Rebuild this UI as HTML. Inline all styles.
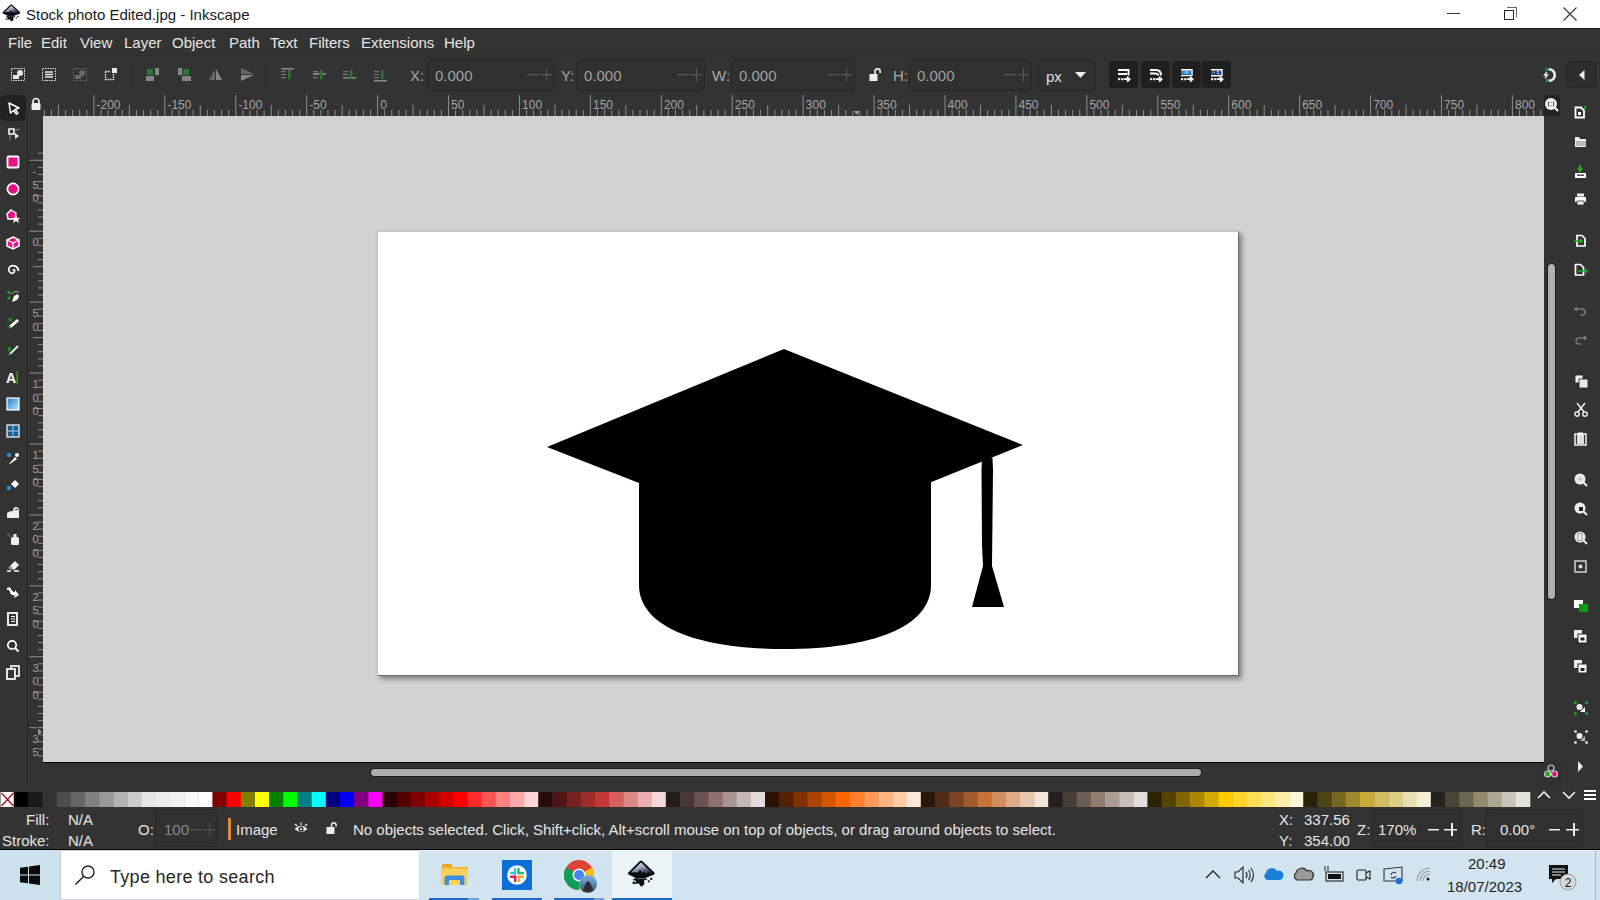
<!DOCTYPE html><html><head><meta charset="utf-8"><style>
*{margin:0;padding:0;box-sizing:border-box}
html,body{width:1600px;height:900px;overflow:hidden;background:#333333;font-family:"Liberation Sans",sans-serif;position:relative}
.ab{position:absolute}
.t{position:absolute;white-space:nowrap;line-height:1}
svg{position:absolute;overflow:visible}
</style></head><body>

<div class="ab" style="left:0px;top:0px;width:1600px;height:28px;background:#fff;"></div>
<div class="ab" style="left:0px;top:28px;width:1600px;height:1px;background:#1e1e1e;"></div>
<div class="ab" style="left:0px;top:55px;width:1600px;height:1px;background:#2d2d2d;"></div>
<svg style="left:2px;top:4px" width="20" height="20" viewBox="0 0 20 20"><defs><linearGradient id="ig2" x1="0" y1="0" x2="0.6" y2="1"><stop offset="0" stop-color="#fff"/><stop offset="0.55" stop-color="#9aa0b8"/><stop offset="1" stop-color="#2a3050"/></linearGradient></defs><g transform="scale(0.64)"><path d="M13 1.2Q14.5 0 16 1.2L28 12.5Q29.5 14.2 27.5 15.2L19 18.5L21 20.5L17.5 21L18 25L14.5 27.5L12 24L8 25L9.5 21.5L5.5 20.5L9 18.5L2 15.2Q0 14.2 1.5 12.5Z" fill="#0c0c10"/><path d="M14.5 2.5L25.5 13Q22 12.5 19 14.5L17 11.5L15.5 14L13.5 9.5L11.5 13Q8 12 4 13Z" fill="url(#ig2)"/><path d="M10 19.5Q14 18.5 19 19.5" stroke="#888" stroke-width="0.8" fill="none"/><circle cx="7" cy="23.5" r="1.3" fill="#0c0c10"/><circle cx="22.5" cy="22" r="1.1" fill="#0c0c10"/><circle cx="25" cy="19.5" r="1.2" fill="#0c0c10"/></g></svg>
<div class="t" style="left:26px;top:7px;font-size:15px;color:#1a1a1a;">Stock photo Edited.jpg - Inkscape</div>
<div class="ab" style="left:1447px;top:13px;width:13px;height:1px;background:#333;"></div>
<div class="ab" style="left:1504px;top:10px;width:10px;height:10px;background:transparent;border:1px solid #222"></div>
<div class="ab" style="left:1507px;top:7px;width:10px;height:10px;background:transparent;border-top:1px solid #666;border-right:1px solid #666"></div>
<svg style="left:1563px;top:7px" width="14" height="14" viewBox="0 0 14 14"><path d="M0.5 0.5L13.5 13.5M13.5 0.5L0.5 13.5" stroke="#333" stroke-width="1.1"/></svg>
<div class="t" style="left:8px;top:35px;font-size:15px;color:#e6e6e6;">File</div>
<div class="t" style="left:41px;top:35px;font-size:15px;color:#e6e6e6;">Edit</div>
<div class="t" style="left:80px;top:35px;font-size:15px;color:#e6e6e6;">View</div>
<div class="t" style="left:124px;top:35px;font-size:15px;color:#e6e6e6;">Layer</div>
<div class="t" style="left:172px;top:35px;font-size:15px;color:#e6e6e6;">Object</div>
<div class="t" style="left:229px;top:35px;font-size:15px;color:#e6e6e6;">Path</div>
<div class="t" style="left:270px;top:35px;font-size:15px;color:#e6e6e6;">Text</div>
<div class="t" style="left:309px;top:35px;font-size:15px;color:#e6e6e6;">Filters</div>
<div class="t" style="left:361px;top:35px;font-size:15px;color:#e6e6e6;">Extensions</div>
<div class="t" style="left:444px;top:35px;font-size:15px;color:#e6e6e6;">Help</div>
<svg style="left:11px;top:68px" width="14" height="13" viewBox="0 0 14 13"><rect x="0.5" y="0.5" width="13" height="12" fill="none" stroke="#e8e8e8" stroke-dasharray="1.5 1"/><rect x="2" y="7" width="6" height="4" fill="#e8e8e8"/><circle cx="9" cy="5" r="3" fill="#e8e8e8"/></svg>
<svg style="left:42px;top:68px" width="14" height="13" viewBox="0 0 14 13"><rect x="0.5" y="0.5" width="13" height="12" fill="none" stroke="#e8e8e8" stroke-dasharray="1.5 1"/><path d="M3 4h8M3 6.5h8M3 9h8" stroke="#e8e8e8" stroke-width="1.6"/></svg>
<svg style="left:73px;top:68px" width="14" height="13" viewBox="0 0 14 13"><rect x="0.5" y="0.5" width="13" height="12" fill="none" stroke="#6a6a6a" stroke-dasharray="1.5 1"/><rect x="2" y="7" width="6" height="4" fill="#6a6a6a"/><circle cx="9" cy="5" r="3" fill="#6a6a6a"/></svg>
<svg style="left:104px;top:67px" width="14" height="14" viewBox="0 0 14 14"><path d="M1.5 4.5V12.5H9.5V7M1.5 4.5H6" fill="none" stroke="#e8e8e8" stroke-width="1.4" stroke-dasharray="1.6 0.9"/><rect x="8" y="1" width="5" height="5" fill="#e8e8e8"/></svg>
<svg style="left:146px;top:68px" width="14" height="13" viewBox="0 0 14 13"><rect x="0" y="8" width="8" height="5" fill="#858585"/><rect x="1" y="1" width="6" height="6" fill="#2f7430"/><rect x="9" y="0" width="4" height="7" fill="#858585"/></svg>
<svg style="left:177px;top:68px" width="14" height="13" viewBox="0 0 14 13"><rect x="5" y="8" width="9" height="5" fill="#858585"/><rect x="6" y="1" width="6" height="6" fill="#2f7430"/><rect x="1" y="0" width="4" height="7" fill="#858585"/></svg>
<svg style="left:209px;top:68px" width="13" height="13" viewBox="0 0 13 13"><path d="M6 1L0 12H6Z" fill="#666"/><path d="M7 1L13 12H7Z" fill="#858585"/></svg>
<svg style="left:240px;top:68px" width="15" height="13" viewBox="0 0 15 13"><path d="M1 0L14 6H1Z" fill="#666"/><path d="M1 7L14 7L1 13Z" fill="#858585"/></svg>
<div class="ab" style="left:266px;top:62px;width:1px;height:26px;background:#2e2e2e;"></div>
<div class="ab" style="left:132px;top:62px;width:1px;height:26px;background:#2e2e2e;"></div>
<svg style="left:281px;top:68px" width="13" height="13" viewBox="0 0 13 13"><rect x="0" y="0" width="13" height="1.6" fill="#858585"/><rect x="0" y="3" width="5" height="1.2" fill="#777"/><rect x="0" y="6" width="5" height="1.2" fill="#777"/><rect x="0" y="9" width="5" height="1.2" fill="#777"/><rect x="7" y="2" width="2.5" height="9" fill="#2f7430"/></svg>
<svg style="left:313px;top:68px" width="13" height="13" viewBox="0 0 13 13"><rect x="0" y="5" width="13" height="1.6" fill="#858585"/><rect x="0" y="3" width="5" height="1.2" fill="#777"/><rect x="0" y="6" width="5" height="1.2" fill="#777"/><rect x="0" y="9" width="5" height="1.2" fill="#777"/><rect x="7" y="2" width="2.5" height="9" fill="#2f7430"/></svg>
<svg style="left:343px;top:68px" width="13" height="13" viewBox="0 0 13 13"><rect x="0" y="9" width="13" height="1.6" fill="#858585"/><rect x="0" y="3" width="5" height="1.2" fill="#777"/><rect x="0" y="6" width="5" height="1.2" fill="#777"/><rect x="0" y="9" width="5" height="1.2" fill="#777"/><rect x="7" y="2" width="2.5" height="9" fill="#2f7430"/></svg>
<svg style="left:374px;top:68px" width="13" height="13" viewBox="0 0 13 13"><rect x="0" y="12" width="13" height="1.6" fill="#858585"/><rect x="0" y="3" width="5" height="1.2" fill="#777"/><rect x="0" y="6" width="5" height="1.2" fill="#777"/><rect x="0" y="9" width="5" height="1.2" fill="#777"/><rect x="7" y="2" width="2.5" height="9" fill="#2f7430"/></svg>
<div class="t" style="left:410px;top:68px;font-size:15px;color:#a8a8a8;">X:</div>
<div class="ab" style="left:427px;top:59px;width:128px;height:32px;background:#303030;border:1px solid #252525;border-radius:5px"></div>
<div class="t" style="left:435px;top:68px;font-size:15px;color:#a0a0a0;">0.000</div>
<svg style="left:527px;top:74px" width="26" height="2" viewBox="0 0 26 2"><rect x="0" y="0" width="12" height="1.3" fill="#585858"/><rect x="14" y="0" width="11" height="1.3" fill="#585858"/></svg>
<div class="ab" style="left:546px;top:68px;width:1px;height:14px;background:#585858;"></div>
<div class="t" style="left:561px;top:68px;font-size:15px;color:#a8a8a8;">Y:</div>
<div class="ab" style="left:576px;top:59px;width:129px;height:32px;background:#303030;border:1px solid #252525;border-radius:5px"></div>
<div class="t" style="left:584px;top:68px;font-size:15px;color:#a0a0a0;">0.000</div>
<svg style="left:677px;top:74px" width="26" height="2" viewBox="0 0 26 2"><rect x="0" y="0" width="12" height="1.3" fill="#585858"/><rect x="14" y="0" width="11" height="1.3" fill="#585858"/></svg>
<div class="ab" style="left:696px;top:68px;width:1px;height:14px;background:#585858;"></div>
<div class="t" style="left:712px;top:68px;font-size:15px;color:#a8a8a8;">W:</div>
<div class="ab" style="left:731px;top:59px;width:124px;height:32px;background:#303030;border:1px solid #252525;border-radius:5px"></div>
<div class="t" style="left:739px;top:68px;font-size:15px;color:#a0a0a0;">0.000</div>
<svg style="left:827px;top:74px" width="26" height="2" viewBox="0 0 26 2"><rect x="0" y="0" width="12" height="1.3" fill="#585858"/><rect x="14" y="0" width="11" height="1.3" fill="#585858"/></svg>
<div class="ab" style="left:846px;top:68px;width:1px;height:14px;background:#585858;"></div>
<div class="t" style="left:893px;top:68px;font-size:15px;color:#a8a8a8;">H:</div>
<div class="ab" style="left:909px;top:59px;width:123px;height:32px;background:#303030;border:1px solid #252525;border-radius:5px"></div>
<div class="t" style="left:917px;top:68px;font-size:15px;color:#a0a0a0;">0.000</div>
<svg style="left:1004px;top:74px" width="26" height="2" viewBox="0 0 26 2"><rect x="0" y="0" width="12" height="1.3" fill="#585858"/><rect x="14" y="0" width="11" height="1.3" fill="#585858"/></svg>
<div class="ab" style="left:1023px;top:68px;width:1px;height:14px;background:#585858;"></div>
<svg style="left:869px;top:68px" width="13" height="13" viewBox="0 0 13 13"><path d="M6 6V3.5A2.6 2.6 0 0 1 11.2 3.5V5" stroke="#eee" stroke-width="1.6" fill="none"/><rect x="0.5" y="6" width="8" height="7" fill="#eee"/></svg>
<div class="ab" style="left:1037px;top:59px;width:59px;height:32px;background:#303030;border:1px solid #252525;border-radius:5px"></div>
<div class="t" style="left:1046px;top:69px;font-size:15px;color:#e0e0e0;">px</div>
<svg style="left:1075px;top:72px" width="11" height="6" viewBox="0 0 11 6"><path d="M0 0H11L5.5 6Z" fill="#eee"/></svg>
<div class="ab" style="left:1109px;top:61px;width:29px;height:27px;background:#1f1f1f;border-radius:4px"></div>
<div class="ab" style="left:1141px;top:61px;width:29px;height:27px;background:#1f1f1f;border-radius:4px"></div>
<div class="ab" style="left:1172px;top:61px;width:29px;height:27px;background:#1f1f1f;border-radius:4px"></div>
<div class="ab" style="left:1202px;top:61px;width:29px;height:27px;background:#1f1f1f;border-radius:4px"></div>
<svg style="left:1118px;top:69px" width="14" height="13" viewBox="0 0 14 13"><path d="M0 1H10.5V6.5M0 5H9" stroke="#fff" stroke-width="1.9" fill="none"/><rect x="0" y="9.2" width="2.2" height="2" fill="#fff"/><rect x="3.2" y="9.2" width="2.2" height="2" fill="#fff"/><path d="M6 10.2H11.5M9 7.8L11.6 10.2L9 12.6" stroke="#fff" stroke-width="1.8" fill="none"/></svg>
<svg style="left:1150px;top:69px" width="14" height="13" viewBox="0 0 14 13"><path d="M0 1H6Q11 1 11 6.5M0 4.5H5Q8 4.5 8.5 6.5" stroke="#fff" stroke-width="1.8" fill="none"/><rect x="0" y="9.2" width="2.2" height="2" fill="#fff"/><rect x="3.2" y="9.2" width="2.2" height="2" fill="#fff"/><path d="M6 10.2H11.5M9 7.8L11.6 10.2L9 12.6" stroke="#fff" stroke-width="1.8" fill="none"/></svg>
<svg style="left:1181px;top:69px" width="14" height="13" viewBox="0 0 14 13"><defs><linearGradient id="tbg" x1="0" x2="1"><stop offset="0" stop-color="#1f6fb8"/><stop offset="0.6" stop-color="#5cc0ff"/><stop offset="1" stop-color="#1f6fb8"/></linearGradient></defs><rect x="0" y="1.5" width="10" height="4" fill="url(#tbg)"/><path d="M0 0.8H11V7M0 6.6H11" stroke="#fff" stroke-width="1.4" fill="none"/><rect x="0" y="9.2" width="2.2" height="2" fill="#fff"/><rect x="3.2" y="9.2" width="2.2" height="2" fill="#fff"/><path d="M6 10.2H11.5M9 7.8L11.6 10.2L9 12.6" stroke="#fff" stroke-width="1.8" fill="none"/></svg>
<svg style="left:1211px;top:69px" width="14" height="13" viewBox="0 0 14 13"><rect x="0" y="1.5" width="10" height="4.5" fill="#173a66"/><path d="M1 4.5L2.5 2.5L4 4.5M5.5 2.5H8L6 4.5H8.5" stroke="#8fc4f0" stroke-width="0.9" fill="none"/><path d="M0 0.8H11V7M0 6.8H11" stroke="#fff" stroke-width="1.4" fill="none"/><rect x="0" y="9.2" width="2.2" height="2" fill="#fff"/><rect x="3.2" y="9.2" width="2.2" height="2" fill="#fff"/><path d="M6 10.2H11.5M9 7.8L11.6 10.2L9 12.6" stroke="#fff" stroke-width="1.8" fill="none"/></svg>
<svg style="left:1543px;top:67px" width="16" height="16" viewBox="0 0 16 16"><path d="M6 2.2A5.8 5.8 0 0 1 6 13.8" stroke="#f0f0f0" stroke-width="2.6" fill="none"/><rect x="2.5" y="1" width="3.5" height="3.2" fill="#2a8a3a"/><rect x="2.5" y="11.8" width="3.5" height="3.2" fill="#2a8a3a"/><path d="M4 5L1.5 8H4.5L2 11" stroke="#f0f0f0" stroke-width="1.3" fill="none"/></svg>
<div class="ab" style="left:1567px;top:61px;width:29px;height:27px;background:#2e2e2e;border:1px solid #242424;border-radius:4px"></div>
<svg style="left:1579px;top:70px" width="6" height="10" viewBox="0 0 6 10"><path d="M5.5 0V10L0 5Z" fill="#eee"/></svg>
<div class="ab" style="left:43px;top:116px;width:1501px;height:646px;background:#d2d2d2;"></div>
<div class="ab" style="left:43px;top:762px;width:1501px;height:1px;background:#000;"></div>
<div class="ab" style="left:377px;top:231px;width:862px;height:445px;background:#fff;border-top:1px solid #c4c4c4;border-left:1px solid #c4c4c4;border-right:1px solid #6a6a6a;border-bottom:1px solid #6a6a6a;box-shadow:3px 3px 5px rgba(0,0,0,0.38)"></div>
<svg style="left:540px;top:340px" width="470" height="320" viewBox="0 0 470 320"><g transform="translate(-540,-340)" fill="#000"><path d="M547 447L784 349L1023 445L929 483L639 483Z"/><path d="M639 475H931V585C931 627 872 649 785 649C698 649 639 627 639 585Z"/><path d="M982 458H992.5L993 470L992 566L1004 607H972L983 566L982 545L981.5 470Z"/></g></svg>
<div class="ab" style="left:43px;top:93px;width:1501px;height:23px;background:#333333;"></div>
<svg style="left:0;top:0" width="1600" height="900"><rect x="43.75" y="110" width="1" height="6" fill="#8e8e8e"/><rect x="50.85" y="110" width="1" height="6" fill="#8e8e8e"/><rect x="57.94" y="105" width="1" height="11" fill="#8e8e8e"/><rect x="65.03" y="110" width="1" height="6" fill="#8e8e8e"/><rect x="72.12" y="110" width="1" height="6" fill="#8e8e8e"/><rect x="79.21" y="110" width="1" height="6" fill="#8e8e8e"/><rect x="86.31" y="110" width="1" height="6" fill="#8e8e8e"/><rect x="93.40" y="95" width="1" height="21" fill="#8e8e8e"/><rect x="100.49" y="110" width="1" height="6" fill="#8e8e8e"/><rect x="107.58" y="110" width="1" height="6" fill="#8e8e8e"/><rect x="114.68" y="110" width="1" height="6" fill="#8e8e8e"/><rect x="121.77" y="110" width="1" height="6" fill="#8e8e8e"/><rect x="128.86" y="105" width="1" height="11" fill="#8e8e8e"/><rect x="135.96" y="110" width="1" height="6" fill="#8e8e8e"/><rect x="143.05" y="110" width="1" height="6" fill="#8e8e8e"/><rect x="150.14" y="110" width="1" height="6" fill="#8e8e8e"/><rect x="157.23" y="110" width="1" height="6" fill="#8e8e8e"/><rect x="164.33" y="95" width="1" height="21" fill="#8e8e8e"/><rect x="171.42" y="110" width="1" height="6" fill="#8e8e8e"/><rect x="178.51" y="110" width="1" height="6" fill="#8e8e8e"/><rect x="185.60" y="110" width="1" height="6" fill="#8e8e8e"/><rect x="192.70" y="110" width="1" height="6" fill="#8e8e8e"/><rect x="199.79" y="105" width="1" height="11" fill="#8e8e8e"/><rect x="206.88" y="110" width="1" height="6" fill="#8e8e8e"/><rect x="213.97" y="110" width="1" height="6" fill="#8e8e8e"/><rect x="221.07" y="110" width="1" height="6" fill="#8e8e8e"/><rect x="228.16" y="110" width="1" height="6" fill="#8e8e8e"/><rect x="235.25" y="95" width="1" height="21" fill="#8e8e8e"/><rect x="242.34" y="110" width="1" height="6" fill="#8e8e8e"/><rect x="249.44" y="110" width="1" height="6" fill="#8e8e8e"/><rect x="256.53" y="110" width="1" height="6" fill="#8e8e8e"/><rect x="263.62" y="110" width="1" height="6" fill="#8e8e8e"/><rect x="270.71" y="105" width="1" height="11" fill="#8e8e8e"/><rect x="277.81" y="110" width="1" height="6" fill="#8e8e8e"/><rect x="284.90" y="110" width="1" height="6" fill="#8e8e8e"/><rect x="291.99" y="110" width="1" height="6" fill="#8e8e8e"/><rect x="299.08" y="110" width="1" height="6" fill="#8e8e8e"/><rect x="306.18" y="95" width="1" height="21" fill="#8e8e8e"/><rect x="313.27" y="110" width="1" height="6" fill="#8e8e8e"/><rect x="320.36" y="110" width="1" height="6" fill="#8e8e8e"/><rect x="327.45" y="110" width="1" height="6" fill="#8e8e8e"/><rect x="334.55" y="110" width="1" height="6" fill="#8e8e8e"/><rect x="341.64" y="105" width="1" height="11" fill="#8e8e8e"/><rect x="348.73" y="110" width="1" height="6" fill="#8e8e8e"/><rect x="355.82" y="110" width="1" height="6" fill="#8e8e8e"/><rect x="362.92" y="110" width="1" height="6" fill="#8e8e8e"/><rect x="370.01" y="110" width="1" height="6" fill="#8e8e8e"/><rect x="377.10" y="95" width="1" height="21" fill="#8e8e8e"/><rect x="384.19" y="110" width="1" height="6" fill="#8e8e8e"/><rect x="391.29" y="110" width="1" height="6" fill="#8e8e8e"/><rect x="398.38" y="110" width="1" height="6" fill="#8e8e8e"/><rect x="405.47" y="110" width="1" height="6" fill="#8e8e8e"/><rect x="412.56" y="105" width="1" height="11" fill="#8e8e8e"/><rect x="419.66" y="110" width="1" height="6" fill="#8e8e8e"/><rect x="426.75" y="110" width="1" height="6" fill="#8e8e8e"/><rect x="433.84" y="110" width="1" height="6" fill="#8e8e8e"/><rect x="440.93" y="110" width="1" height="6" fill="#8e8e8e"/><rect x="448.03" y="95" width="1" height="21" fill="#8e8e8e"/><rect x="455.12" y="110" width="1" height="6" fill="#8e8e8e"/><rect x="462.21" y="110" width="1" height="6" fill="#8e8e8e"/><rect x="469.30" y="110" width="1" height="6" fill="#8e8e8e"/><rect x="476.40" y="110" width="1" height="6" fill="#8e8e8e"/><rect x="483.49" y="105" width="1" height="11" fill="#8e8e8e"/><rect x="490.58" y="110" width="1" height="6" fill="#8e8e8e"/><rect x="497.67" y="110" width="1" height="6" fill="#8e8e8e"/><rect x="504.77" y="110" width="1" height="6" fill="#8e8e8e"/><rect x="511.86" y="110" width="1" height="6" fill="#8e8e8e"/><rect x="518.95" y="95" width="1" height="21" fill="#8e8e8e"/><rect x="526.04" y="110" width="1" height="6" fill="#8e8e8e"/><rect x="533.13" y="110" width="1" height="6" fill="#8e8e8e"/><rect x="540.23" y="110" width="1" height="6" fill="#8e8e8e"/><rect x="547.32" y="110" width="1" height="6" fill="#8e8e8e"/><rect x="554.41" y="105" width="1" height="11" fill="#8e8e8e"/><rect x="561.50" y="110" width="1" height="6" fill="#8e8e8e"/><rect x="568.60" y="110" width="1" height="6" fill="#8e8e8e"/><rect x="575.69" y="110" width="1" height="6" fill="#8e8e8e"/><rect x="582.78" y="110" width="1" height="6" fill="#8e8e8e"/><rect x="589.88" y="95" width="1" height="21" fill="#8e8e8e"/><rect x="596.97" y="110" width="1" height="6" fill="#8e8e8e"/><rect x="604.06" y="110" width="1" height="6" fill="#8e8e8e"/><rect x="611.15" y="110" width="1" height="6" fill="#8e8e8e"/><rect x="618.25" y="110" width="1" height="6" fill="#8e8e8e"/><rect x="625.34" y="105" width="1" height="11" fill="#8e8e8e"/><rect x="632.43" y="110" width="1" height="6" fill="#8e8e8e"/><rect x="639.52" y="110" width="1" height="6" fill="#8e8e8e"/><rect x="646.62" y="110" width="1" height="6" fill="#8e8e8e"/><rect x="653.71" y="110" width="1" height="6" fill="#8e8e8e"/><rect x="660.80" y="95" width="1" height="21" fill="#8e8e8e"/><rect x="667.89" y="110" width="1" height="6" fill="#8e8e8e"/><rect x="674.99" y="110" width="1" height="6" fill="#8e8e8e"/><rect x="682.08" y="110" width="1" height="6" fill="#8e8e8e"/><rect x="689.17" y="110" width="1" height="6" fill="#8e8e8e"/><rect x="696.26" y="105" width="1" height="11" fill="#8e8e8e"/><rect x="703.36" y="110" width="1" height="6" fill="#8e8e8e"/><rect x="710.45" y="110" width="1" height="6" fill="#8e8e8e"/><rect x="717.54" y="110" width="1" height="6" fill="#8e8e8e"/><rect x="724.63" y="110" width="1" height="6" fill="#8e8e8e"/><rect x="731.73" y="95" width="1" height="21" fill="#8e8e8e"/><rect x="738.82" y="110" width="1" height="6" fill="#8e8e8e"/><rect x="745.91" y="110" width="1" height="6" fill="#8e8e8e"/><rect x="753.00" y="110" width="1" height="6" fill="#8e8e8e"/><rect x="760.10" y="110" width="1" height="6" fill="#8e8e8e"/><rect x="767.19" y="105" width="1" height="11" fill="#8e8e8e"/><rect x="774.28" y="110" width="1" height="6" fill="#8e8e8e"/><rect x="781.37" y="110" width="1" height="6" fill="#8e8e8e"/><rect x="788.47" y="110" width="1" height="6" fill="#8e8e8e"/><rect x="795.56" y="110" width="1" height="6" fill="#8e8e8e"/><rect x="802.65" y="95" width="1" height="21" fill="#8e8e8e"/><rect x="809.74" y="110" width="1" height="6" fill="#8e8e8e"/><rect x="816.84" y="110" width="1" height="6" fill="#8e8e8e"/><rect x="823.93" y="110" width="1" height="6" fill="#8e8e8e"/><rect x="831.02" y="110" width="1" height="6" fill="#8e8e8e"/><rect x="838.11" y="105" width="1" height="11" fill="#8e8e8e"/><rect x="845.21" y="110" width="1" height="6" fill="#8e8e8e"/><rect x="852.30" y="110" width="1" height="6" fill="#8e8e8e"/><rect x="859.39" y="110" width="1" height="6" fill="#8e8e8e"/><rect x="866.48" y="110" width="1" height="6" fill="#8e8e8e"/><rect x="873.58" y="95" width="1" height="21" fill="#8e8e8e"/><rect x="880.67" y="110" width="1" height="6" fill="#8e8e8e"/><rect x="887.76" y="110" width="1" height="6" fill="#8e8e8e"/><rect x="894.85" y="110" width="1" height="6" fill="#8e8e8e"/><rect x="901.95" y="110" width="1" height="6" fill="#8e8e8e"/><rect x="909.04" y="105" width="1" height="11" fill="#8e8e8e"/><rect x="916.13" y="110" width="1" height="6" fill="#8e8e8e"/><rect x="923.22" y="110" width="1" height="6" fill="#8e8e8e"/><rect x="930.32" y="110" width="1" height="6" fill="#8e8e8e"/><rect x="937.41" y="110" width="1" height="6" fill="#8e8e8e"/><rect x="944.50" y="95" width="1" height="21" fill="#8e8e8e"/><rect x="951.59" y="110" width="1" height="6" fill="#8e8e8e"/><rect x="958.69" y="110" width="1" height="6" fill="#8e8e8e"/><rect x="965.78" y="110" width="1" height="6" fill="#8e8e8e"/><rect x="972.87" y="110" width="1" height="6" fill="#8e8e8e"/><rect x="979.96" y="105" width="1" height="11" fill="#8e8e8e"/><rect x="987.06" y="110" width="1" height="6" fill="#8e8e8e"/><rect x="994.15" y="110" width="1" height="6" fill="#8e8e8e"/><rect x="1001.24" y="110" width="1" height="6" fill="#8e8e8e"/><rect x="1008.33" y="110" width="1" height="6" fill="#8e8e8e"/><rect x="1015.43" y="95" width="1" height="21" fill="#8e8e8e"/><rect x="1022.52" y="110" width="1" height="6" fill="#8e8e8e"/><rect x="1029.61" y="110" width="1" height="6" fill="#8e8e8e"/><rect x="1036.70" y="110" width="1" height="6" fill="#8e8e8e"/><rect x="1043.80" y="110" width="1" height="6" fill="#8e8e8e"/><rect x="1050.89" y="105" width="1" height="11" fill="#8e8e8e"/><rect x="1057.98" y="110" width="1" height="6" fill="#8e8e8e"/><rect x="1065.07" y="110" width="1" height="6" fill="#8e8e8e"/><rect x="1072.16" y="110" width="1" height="6" fill="#8e8e8e"/><rect x="1079.26" y="110" width="1" height="6" fill="#8e8e8e"/><rect x="1086.35" y="95" width="1" height="21" fill="#8e8e8e"/><rect x="1093.44" y="110" width="1" height="6" fill="#8e8e8e"/><rect x="1100.54" y="110" width="1" height="6" fill="#8e8e8e"/><rect x="1107.63" y="110" width="1" height="6" fill="#8e8e8e"/><rect x="1114.72" y="110" width="1" height="6" fill="#8e8e8e"/><rect x="1121.81" y="105" width="1" height="11" fill="#8e8e8e"/><rect x="1128.91" y="110" width="1" height="6" fill="#8e8e8e"/><rect x="1136.00" y="110" width="1" height="6" fill="#8e8e8e"/><rect x="1143.09" y="110" width="1" height="6" fill="#8e8e8e"/><rect x="1150.18" y="110" width="1" height="6" fill="#8e8e8e"/><rect x="1157.28" y="95" width="1" height="21" fill="#8e8e8e"/><rect x="1164.37" y="110" width="1" height="6" fill="#8e8e8e"/><rect x="1171.46" y="110" width="1" height="6" fill="#8e8e8e"/><rect x="1178.55" y="110" width="1" height="6" fill="#8e8e8e"/><rect x="1185.64" y="110" width="1" height="6" fill="#8e8e8e"/><rect x="1192.74" y="105" width="1" height="11" fill="#8e8e8e"/><rect x="1199.83" y="110" width="1" height="6" fill="#8e8e8e"/><rect x="1206.92" y="110" width="1" height="6" fill="#8e8e8e"/><rect x="1214.02" y="110" width="1" height="6" fill="#8e8e8e"/><rect x="1221.11" y="110" width="1" height="6" fill="#8e8e8e"/><rect x="1228.20" y="95" width="1" height="21" fill="#8e8e8e"/><rect x="1235.29" y="110" width="1" height="6" fill="#8e8e8e"/><rect x="1242.39" y="110" width="1" height="6" fill="#8e8e8e"/><rect x="1249.48" y="110" width="1" height="6" fill="#8e8e8e"/><rect x="1256.57" y="110" width="1" height="6" fill="#8e8e8e"/><rect x="1263.66" y="105" width="1" height="11" fill="#8e8e8e"/><rect x="1270.76" y="110" width="1" height="6" fill="#8e8e8e"/><rect x="1277.85" y="110" width="1" height="6" fill="#8e8e8e"/><rect x="1284.94" y="110" width="1" height="6" fill="#8e8e8e"/><rect x="1292.03" y="110" width="1" height="6" fill="#8e8e8e"/><rect x="1299.12" y="95" width="1" height="21" fill="#8e8e8e"/><rect x="1306.22" y="110" width="1" height="6" fill="#8e8e8e"/><rect x="1313.31" y="110" width="1" height="6" fill="#8e8e8e"/><rect x="1320.40" y="110" width="1" height="6" fill="#8e8e8e"/><rect x="1327.50" y="110" width="1" height="6" fill="#8e8e8e"/><rect x="1334.59" y="105" width="1" height="11" fill="#8e8e8e"/><rect x="1341.68" y="110" width="1" height="6" fill="#8e8e8e"/><rect x="1348.77" y="110" width="1" height="6" fill="#8e8e8e"/><rect x="1355.87" y="110" width="1" height="6" fill="#8e8e8e"/><rect x="1362.96" y="110" width="1" height="6" fill="#8e8e8e"/><rect x="1370.05" y="95" width="1" height="21" fill="#8e8e8e"/><rect x="1377.14" y="110" width="1" height="6" fill="#8e8e8e"/><rect x="1384.24" y="110" width="1" height="6" fill="#8e8e8e"/><rect x="1391.33" y="110" width="1" height="6" fill="#8e8e8e"/><rect x="1398.42" y="110" width="1" height="6" fill="#8e8e8e"/><rect x="1405.51" y="105" width="1" height="11" fill="#8e8e8e"/><rect x="1412.61" y="110" width="1" height="6" fill="#8e8e8e"/><rect x="1419.70" y="110" width="1" height="6" fill="#8e8e8e"/><rect x="1426.79" y="110" width="1" height="6" fill="#8e8e8e"/><rect x="1433.88" y="110" width="1" height="6" fill="#8e8e8e"/><rect x="1440.97" y="95" width="1" height="21" fill="#8e8e8e"/><rect x="1448.07" y="110" width="1" height="6" fill="#8e8e8e"/><rect x="1455.16" y="110" width="1" height="6" fill="#8e8e8e"/><rect x="1462.25" y="110" width="1" height="6" fill="#8e8e8e"/><rect x="1469.35" y="110" width="1" height="6" fill="#8e8e8e"/><rect x="1476.44" y="105" width="1" height="11" fill="#8e8e8e"/><rect x="1483.53" y="110" width="1" height="6" fill="#8e8e8e"/><rect x="1490.62" y="110" width="1" height="6" fill="#8e8e8e"/><rect x="1497.72" y="110" width="1" height="6" fill="#8e8e8e"/><rect x="1504.81" y="110" width="1" height="6" fill="#8e8e8e"/><rect x="1511.90" y="95" width="1" height="21" fill="#8e8e8e"/><rect x="1518.99" y="110" width="1" height="6" fill="#8e8e8e"/><rect x="1526.09" y="110" width="1" height="6" fill="#8e8e8e"/><rect x="1533.18" y="110" width="1" height="6" fill="#8e8e8e"/><rect x="1540.27" y="110" width="1" height="6" fill="#8e8e8e"/></svg>
<div class="t" style="left:96.5px;top:99px;font-size:12px;color:#a5a5a5;">-200</div>
<div class="t" style="left:167.4px;top:99px;font-size:12px;color:#a5a5a5;">-150</div>
<div class="t" style="left:238.3px;top:99px;font-size:12px;color:#a5a5a5;">-100</div>
<div class="t" style="left:309.3px;top:99px;font-size:12px;color:#a5a5a5;">-50</div>
<div class="t" style="left:380.2px;top:99px;font-size:12px;color:#a5a5a5;">0</div>
<div class="t" style="left:451.1px;top:99px;font-size:12px;color:#a5a5a5;">50</div>
<div class="t" style="left:522.1px;top:99px;font-size:12px;color:#a5a5a5;">100</div>
<div class="t" style="left:593.0px;top:99px;font-size:12px;color:#a5a5a5;">150</div>
<div class="t" style="left:663.9px;top:99px;font-size:12px;color:#a5a5a5;">200</div>
<div class="t" style="left:734.8px;top:99px;font-size:12px;color:#a5a5a5;">250</div>
<div class="t" style="left:805.8px;top:99px;font-size:12px;color:#a5a5a5;">300</div>
<div class="t" style="left:876.7px;top:99px;font-size:12px;color:#a5a5a5;">350</div>
<div class="t" style="left:947.6px;top:99px;font-size:12px;color:#a5a5a5;">400</div>
<div class="t" style="left:1018.5px;top:99px;font-size:12px;color:#a5a5a5;">450</div>
<div class="t" style="left:1089.4px;top:99px;font-size:12px;color:#a5a5a5;">500</div>
<div class="t" style="left:1160.4px;top:99px;font-size:12px;color:#a5a5a5;">550</div>
<div class="t" style="left:1231.3px;top:99px;font-size:12px;color:#a5a5a5;">600</div>
<div class="t" style="left:1302.2px;top:99px;font-size:12px;color:#a5a5a5;">650</div>
<div class="t" style="left:1373.2px;top:99px;font-size:12px;color:#a5a5a5;">700</div>
<div class="t" style="left:1444.1px;top:99px;font-size:12px;color:#a5a5a5;">750</div>
<div class="t" style="left:1515.0px;top:99px;font-size:12px;color:#a5a5a5;">800</div>
<svg style="left:852px;top:110px" width="10" height="6" viewBox="0 0 10 6"><path d="M0.5 0.5H9.5L5 5.5Z" fill="#9a9a9a" stroke="#222" stroke-width="0.8"/></svg>
<div class="ab" style="left:27px;top:116px;width:1px;height:668px;background:#262626;"></div>
<div class="ab" style="left:28px;top:116px;width:15px;height:646px;background:#333333;"></div>
<svg style="left:0;top:0" width="1600" height="900"><rect x="38" y="152.68" width="5" height="1" fill="#8e8e8e"/><rect x="29" y="159.77" width="14" height="1" fill="#8e8e8e"/><rect x="38" y="166.87" width="5" height="1" fill="#8e8e8e"/><rect x="38" y="173.96" width="5" height="1" fill="#8e8e8e"/><rect x="38" y="181.05" width="5" height="1" fill="#8e8e8e"/><rect x="38" y="188.14" width="5" height="1" fill="#8e8e8e"/><rect x="33" y="195.24" width="10" height="1" fill="#8e8e8e"/><rect x="38" y="202.33" width="5" height="1" fill="#8e8e8e"/><rect x="38" y="209.42" width="5" height="1" fill="#8e8e8e"/><rect x="38" y="216.51" width="5" height="1" fill="#8e8e8e"/><rect x="38" y="223.61" width="5" height="1" fill="#8e8e8e"/><rect x="29" y="230.70" width="14" height="1" fill="#8e8e8e"/><rect x="38" y="237.79" width="5" height="1" fill="#8e8e8e"/><rect x="38" y="244.88" width="5" height="1" fill="#8e8e8e"/><rect x="38" y="251.98" width="5" height="1" fill="#8e8e8e"/><rect x="38" y="259.07" width="5" height="1" fill="#8e8e8e"/><rect x="33" y="266.16" width="10" height="1" fill="#8e8e8e"/><rect x="38" y="273.25" width="5" height="1" fill="#8e8e8e"/><rect x="38" y="280.35" width="5" height="1" fill="#8e8e8e"/><rect x="38" y="287.44" width="5" height="1" fill="#8e8e8e"/><rect x="38" y="294.53" width="5" height="1" fill="#8e8e8e"/><rect x="29" y="301.62" width="14" height="1" fill="#8e8e8e"/><rect x="38" y="308.72" width="5" height="1" fill="#8e8e8e"/><rect x="38" y="315.81" width="5" height="1" fill="#8e8e8e"/><rect x="38" y="322.90" width="5" height="1" fill="#8e8e8e"/><rect x="38" y="330.00" width="5" height="1" fill="#8e8e8e"/><rect x="33" y="337.09" width="10" height="1" fill="#8e8e8e"/><rect x="38" y="344.18" width="5" height="1" fill="#8e8e8e"/><rect x="38" y="351.27" width="5" height="1" fill="#8e8e8e"/><rect x="38" y="358.37" width="5" height="1" fill="#8e8e8e"/><rect x="38" y="365.46" width="5" height="1" fill="#8e8e8e"/><rect x="29" y="372.55" width="14" height="1" fill="#8e8e8e"/><rect x="38" y="379.64" width="5" height="1" fill="#8e8e8e"/><rect x="38" y="386.74" width="5" height="1" fill="#8e8e8e"/><rect x="38" y="393.83" width="5" height="1" fill="#8e8e8e"/><rect x="38" y="400.92" width="5" height="1" fill="#8e8e8e"/><rect x="33" y="408.01" width="10" height="1" fill="#8e8e8e"/><rect x="38" y="415.11" width="5" height="1" fill="#8e8e8e"/><rect x="38" y="422.20" width="5" height="1" fill="#8e8e8e"/><rect x="38" y="429.29" width="5" height="1" fill="#8e8e8e"/><rect x="38" y="436.38" width="5" height="1" fill="#8e8e8e"/><rect x="29" y="443.48" width="14" height="1" fill="#8e8e8e"/><rect x="38" y="450.57" width="5" height="1" fill="#8e8e8e"/><rect x="38" y="457.66" width="5" height="1" fill="#8e8e8e"/><rect x="38" y="464.75" width="5" height="1" fill="#8e8e8e"/><rect x="38" y="471.85" width="5" height="1" fill="#8e8e8e"/><rect x="33" y="478.94" width="10" height="1" fill="#8e8e8e"/><rect x="38" y="486.03" width="5" height="1" fill="#8e8e8e"/><rect x="38" y="493.12" width="5" height="1" fill="#8e8e8e"/><rect x="38" y="500.22" width="5" height="1" fill="#8e8e8e"/><rect x="38" y="507.31" width="5" height="1" fill="#8e8e8e"/><rect x="29" y="514.40" width="14" height="1" fill="#8e8e8e"/><rect x="38" y="521.49" width="5" height="1" fill="#8e8e8e"/><rect x="38" y="528.59" width="5" height="1" fill="#8e8e8e"/><rect x="38" y="535.68" width="5" height="1" fill="#8e8e8e"/><rect x="38" y="542.77" width="5" height="1" fill="#8e8e8e"/><rect x="33" y="549.86" width="10" height="1" fill="#8e8e8e"/><rect x="38" y="556.95" width="5" height="1" fill="#8e8e8e"/><rect x="38" y="564.05" width="5" height="1" fill="#8e8e8e"/><rect x="38" y="571.14" width="5" height="1" fill="#8e8e8e"/><rect x="38" y="578.23" width="5" height="1" fill="#8e8e8e"/><rect x="29" y="585.33" width="14" height="1" fill="#8e8e8e"/><rect x="38" y="592.42" width="5" height="1" fill="#8e8e8e"/><rect x="38" y="599.51" width="5" height="1" fill="#8e8e8e"/><rect x="38" y="606.60" width="5" height="1" fill="#8e8e8e"/><rect x="38" y="613.69" width="5" height="1" fill="#8e8e8e"/><rect x="33" y="620.79" width="10" height="1" fill="#8e8e8e"/><rect x="38" y="627.88" width="5" height="1" fill="#8e8e8e"/><rect x="38" y="634.97" width="5" height="1" fill="#8e8e8e"/><rect x="38" y="642.07" width="5" height="1" fill="#8e8e8e"/><rect x="38" y="649.16" width="5" height="1" fill="#8e8e8e"/><rect x="29" y="656.25" width="14" height="1" fill="#8e8e8e"/><rect x="38" y="663.34" width="5" height="1" fill="#8e8e8e"/><rect x="38" y="670.43" width="5" height="1" fill="#8e8e8e"/><rect x="38" y="677.53" width="5" height="1" fill="#8e8e8e"/><rect x="38" y="684.62" width="5" height="1" fill="#8e8e8e"/><rect x="33" y="691.71" width="10" height="1" fill="#8e8e8e"/><rect x="38" y="698.81" width="5" height="1" fill="#8e8e8e"/><rect x="38" y="705.90" width="5" height="1" fill="#8e8e8e"/><rect x="38" y="712.99" width="5" height="1" fill="#8e8e8e"/><rect x="38" y="720.08" width="5" height="1" fill="#8e8e8e"/><rect x="29" y="727.17" width="14" height="1" fill="#8e8e8e"/><rect x="38" y="734.27" width="5" height="1" fill="#8e8e8e"/><rect x="38" y="741.36" width="5" height="1" fill="#8e8e8e"/><rect x="38" y="748.45" width="5" height="1" fill="#8e8e8e"/><rect x="38" y="755.55" width="5" height="1" fill="#8e8e8e"/></svg>
<div class="ab" style="left:28px;top:116px;width:15px;height:641px;overflow:hidden">
<div class="t" style="left:4.5px;top:50.3px;font-size:11px;color:#a0a0a0;">-</div>
<div class="t" style="left:4.5px;top:63.8px;font-size:11px;color:#a0a0a0;">5</div>
<div class="t" style="left:4.5px;top:77.3px;font-size:11px;color:#a0a0a0;">0</div>
<div class="t" style="left:4.5px;top:121.2px;font-size:11px;color:#a0a0a0;">0</div>
<div class="t" style="left:4.5px;top:192.1px;font-size:11px;color:#a0a0a0;">5</div>
<div class="t" style="left:4.5px;top:205.6px;font-size:11px;color:#a0a0a0;">0</div>
<div class="t" style="left:4.5px;top:263.1px;font-size:11px;color:#a0a0a0;">1</div>
<div class="t" style="left:4.5px;top:276.6px;font-size:11px;color:#a0a0a0;">0</div>
<div class="t" style="left:4.5px;top:290.1px;font-size:11px;color:#a0a0a0;">0</div>
<div class="t" style="left:4.5px;top:334.0px;font-size:11px;color:#a0a0a0;">1</div>
<div class="t" style="left:4.5px;top:347.5px;font-size:11px;color:#a0a0a0;">5</div>
<div class="t" style="left:4.5px;top:361.0px;font-size:11px;color:#a0a0a0;">0</div>
<div class="t" style="left:4.5px;top:404.9px;font-size:11px;color:#a0a0a0;">2</div>
<div class="t" style="left:4.5px;top:418.4px;font-size:11px;color:#a0a0a0;">0</div>
<div class="t" style="left:4.5px;top:431.9px;font-size:11px;color:#a0a0a0;">0</div>
<div class="t" style="left:4.5px;top:475.8px;font-size:11px;color:#a0a0a0;">2</div>
<div class="t" style="left:4.5px;top:489.3px;font-size:11px;color:#a0a0a0;">5</div>
<div class="t" style="left:4.5px;top:502.8px;font-size:11px;color:#a0a0a0;">0</div>
<div class="t" style="left:4.5px;top:546.8px;font-size:11px;color:#a0a0a0;">3</div>
<div class="t" style="left:4.5px;top:560.2px;font-size:11px;color:#a0a0a0;">0</div>
<div class="t" style="left:4.5px;top:573.8px;font-size:11px;color:#a0a0a0;">0</div>
<div class="t" style="left:4.5px;top:617.7px;font-size:11px;color:#a0a0a0;">3</div>
<div class="t" style="left:4.5px;top:631.2px;font-size:11px;color:#a0a0a0;">5</div>
<div class="t" style="left:4.5px;top:644.7px;font-size:11px;color:#a0a0a0;">0</div>
<div class="t" style="left:4.5px;top:688.6px;font-size:11px;color:#a0a0a0;">4</div>
<div class="t" style="left:4.5px;top:702.1px;font-size:11px;color:#a0a0a0;">0</div>
<div class="t" style="left:4.5px;top:715.6px;font-size:11px;color:#a0a0a0;">0</div>
</div>
<svg style="left:37px;top:727px" width="6" height="10" viewBox="0 0 6 10"><path d="M0.5 0.5V9.5L5.5 5Z" fill="#9a9a9a" stroke="#222" stroke-width="0.8"/></svg>
<div class="ab" style="left:0px;top:95px;width:26px;height:26px;background:#222;border-radius:5px"></div>
<svg style="left:8px;top:102px" width="12" height="13" viewBox="0 0 12 13"><path d="M1 1L11 6L7 7.5L10 11L8.5 12.3L5.5 8.5L2.5 11Z" fill="none" stroke="#fff" stroke-width="1.5" stroke-linejoin="round"/></svg>
<svg style="left:31px;top:98px" width="10" height="12" viewBox="0 0 10 12"><path d="M2 5V3.5A3 3 0 0 1 8 3.5V5" stroke="#eee" stroke-width="1.7" fill="none"/><rect x="0.5" y="5" width="9" height="7" rx="1" fill="#eee"/></svg>
<div class="ab" style="left:1544px;top:95px;width:16px;height:21px;background:#222;border-radius:4px"></div>
<svg style="left:1544px;top:97px" width="17" height="17" viewBox="0 0 17 17"><circle cx="7" cy="7" r="6" fill="#eee"/><path d="M10.5 10.5L14 14" stroke="#eee" stroke-width="2.3"/><path d="M4.5 4.5V9.5M9.5 4.5V9.5" stroke="#555" stroke-width="1"/><circle cx="7" cy="5.5" r="0.6" fill="#555"/><circle cx="7" cy="8.5" r="0.6" fill="#555"/></svg>
<svg style="left:6px;top:127px" width="14" height="14" viewBox="0 0 14 14"><rect x="3" y="2" width="5" height="5" fill="none" stroke="#fff" stroke-width="1.5"/><path d="M9 6L13 9L9 12Z" fill="#eee"/><path d="M4 8L4 13" stroke="#888" stroke-width="1"/><path d="M9 3L14 2" stroke="#888"/></svg>
<svg style="left:6px;top:155px" width="14" height="14" viewBox="0 0 14 14"><rect x="1.5" y="1.5" width="11" height="11" fill="#ea0f86" stroke="#fff" stroke-width="1.8" rx="1"/></svg>
<svg style="left:6px;top:182px" width="14" height="14" viewBox="0 0 14 14"><circle cx="7" cy="7" r="5.6" fill="#ea0f86" stroke="#fff" stroke-width="1.7"/></svg>
<svg style="left:6px;top:209px" width="14" height="14" viewBox="0 0 14 14"><path d="M5 1L10 4L9 10L2 10L1 5Z" fill="#ea0f86" stroke="#fff" stroke-width="1.4"/><path d="M10 6L11.3 9L14 9L12 11L13 14L10 12L7 14L8 11L6 9L9 9Z" fill="#fff"/></svg>
<svg style="left:6px;top:236px" width="14" height="14" viewBox="0 0 14 14"><path d="M7 1L13 4V10L7 13L1 10V4Z" fill="#ea0f86" stroke="#fff" stroke-width="1.5"/><path d="M1 4L7 7L13 4M7 7V13" stroke="#fff" stroke-width="1.3" fill="none"/></svg>
<svg style="left:6px;top:263px" width="14" height="14" viewBox="0 0 14 14"><path d="M7 7.5A1 1 0 0 1 8.5 7A2.5 2.5 0 0 1 5 10A4 4 0 0 1 4 3.5A5.5 5.5 0 0 1 12.5 8" stroke="#fff" stroke-width="1.7" fill="none"/></svg>
<svg style="left:6px;top:290px" width="14" height="14" viewBox="0 0 14 14"><circle cx="3" cy="2.5" r="1.8" fill="#1a9a1a"/><circle cx="3" cy="8" r="1.8" fill="#1a9a1a"/><path d="M6 12L8 6L12 4L13 7L11 10Z" fill="#fff"/><path d="M5 4Q9 0 13 2" stroke="#999" fill="none"/></svg>
<svg style="left:6px;top:316px" width="14" height="14" viewBox="0 0 14 14"><path d="M2 2L6 2L6 5L3 6Z" fill="#1a8a1a"/><path d="M3 10L11 3L13 5L5 12Z" fill="#fff"/><circle cx="3" cy="11" r="1.5" fill="#1a8a1a"/></svg>
<svg style="left:6px;top:343px" width="14" height="14" viewBox="0 0 14 14"><path d="M2 4L5 4L5 7L2 9Z" fill="#1a8a1a"/><path d="M4 11L12 3" stroke="#eee" stroke-width="1.8"/><circle cx="3" cy="11" r="1.5" fill="#1a8a1a"/></svg>
<svg style="left:6px;top:370px" width="14" height="14" viewBox="0 0 14 14"><text x="0" y="12.5" font-size="14" font-weight="bold" fill="#fff" font-family="Liberation Sans">A</text><rect x="10.5" y="1" width="1.4" height="13" fill="#1faa1f"/></svg>
<svg style="left:6px;top:397px" width="14" height="14" viewBox="0 0 14 14"><defs><linearGradient id="gg" x1="0" y1="0" x2="1" y2="1"><stop offset="0" stop-color="#1a7fd0"/><stop offset="1" stop-color="#bfe6ff"/></linearGradient></defs><rect x="1" y="1" width="12" height="12" fill="url(#gg)" stroke="#fff" stroke-width="1.2"/></svg>
<svg style="left:6px;top:424px" width="14" height="14" viewBox="0 0 14 14"><rect x="1" y="1" width="12" height="12" fill="#1b5e8a" stroke="#fff" stroke-width="1.2"/><path d="M7 1V13M1 7H13" stroke="#9fd0f0" stroke-width="1"/></svg>
<svg style="left:6px;top:451px" width="14" height="14" viewBox="0 0 14 14"><circle cx="3" cy="4" r="2.2" fill="#2b8fd6"/><path d="M3 13L9 6L11 8L4 13Z" fill="#fff"/><circle cx="11" cy="4" r="2" fill="#fff"/></svg>
<svg style="left:6px;top:477px" width="14" height="14" viewBox="0 0 14 14"><path d="M5 7L9 3L13 7L9 11Z" fill="#fff"/><circle cx="3" cy="11" r="2.3" fill="#2b8fd6"/></svg>
<svg style="left:6px;top:505px" width="14" height="14" viewBox="0 0 14 14"><path d="M1 13V8Q3 6 7 6Q7 2 10 2Q13 2 13 5V13Z" fill="#eee"/><path d="M9 5L12 4" stroke="#333" stroke-width="1.2"/></svg>
<svg style="left:6px;top:531px" width="14" height="14" viewBox="0 0 14 14"><rect x="5" y="6" width="8" height="8" rx="1.5" fill="#eee"/><rect x="7.5" y="3" width="3" height="3" fill="#eee"/><circle cx="2" cy="3" r="0.8" fill="#aaa"/><circle cx="4" cy="5" r="0.8" fill="#aaa"/></svg>
<svg style="left:6px;top:558px" width="14" height="14" viewBox="0 0 14 14"><path d="M4 8L9 3L13 7L8 12Z" fill="#eee"/><path d="M4 8L8 12L6 12L2 10Z" fill="#999"/><path d="M1 13H5M8 13H13" stroke="#fff" stroke-width="1.5"/></svg>
<svg style="left:6px;top:585px" width="14" height="14" viewBox="0 0 14 14"><path d="M1 3Q4 1 5 4Q7 8 9 7L9 5L13 10L8 13L9 10Q5 11 4 7Q3 4 1 5Z" fill="#fff"/></svg>
<svg style="left:6px;top:612px" width="14" height="14" viewBox="0 0 14 14"><rect x="2" y="1" width="9" height="12" fill="none" stroke="#fff" stroke-width="1.8"/><path d="M5 4.5H9M5 7H9M5 9.5H9" stroke="#fff" stroke-width="1"/></svg>
<svg style="left:6px;top:639px" width="14" height="14" viewBox="0 0 14 14"><circle cx="6" cy="6" r="4.2" fill="none" stroke="#fff" stroke-width="1.7"/><path d="M9 9L12.5 12.5" stroke="#fff" stroke-width="1.9"/></svg>
<svg style="left:6px;top:665px" width="14" height="14" viewBox="0 0 14 14"><rect x="5" y="1" width="8" height="10" fill="none" stroke="#fff" stroke-width="1.6"/><rect x="1" y="4" width="8" height="10" fill="#333" stroke="#fff" stroke-width="1.7"/></svg>
<div class="ab" style="left:1544px;top:116px;width:16px;height:662px;background:#333333;"></div>
<div class="ab" style="left:1547px;top:263px;width:9px;height:337px;background:#1a1a1a;border-radius:5px"></div>
<div class="ab" style="left:1548px;top:264px;width:7px;height:335px;background:#b0b0b0;border-radius:4px"></div>
<div class="ab" style="left:370px;top:768px;width:832px;height:9px;background:#1a1a1a;border-radius:5px"></div>
<div class="ab" style="left:371px;top:769px;width:830px;height:7px;background:#acacac;border-radius:4px"></div>
<svg style="left:1574px;top:106px" width="14" height="14" viewBox="0 0 14 14"><path d="M1.5 1.5H7L10 4.5V11.5H1.5Z" fill="none" stroke="#fff" stroke-width="1.8"/><rect x="4" y="6" width="3" height="3" fill="#fff"/><circle cx="11" cy="1.5" r="1.5" fill="#1faa1f"/></svg>
<svg style="left:1574px;top:135px" width="14" height="14" viewBox="0 0 14 14"><path d="M1 2H5L6 4H12V12H1Z" fill="#eee"/><rect x="2" y="6" width="10" height="5" fill="#bbb"/></svg>
<svg style="left:1574px;top:165px" width="14" height="14" viewBox="0 0 14 14"><path d="M6 0V5M4 3L6 6L8 3" stroke="#1faa1f" stroke-width="2" fill="none"/><path d="M1 8H12V13H1Z" fill="#fff"/><rect x="3" y="9.5" width="7" height="1.3" fill="#333"/></svg>
<svg style="left:1574px;top:193px" width="14" height="14" viewBox="0 0 14 14"><rect x="3" y="0.5" width="7" height="3" fill="#eee"/><rect x="1" y="4" width="11" height="5" fill="#fff"/><rect x="3" y="8" width="7" height="4" fill="#eee" stroke="#333" stroke-width="0.8"/></svg>
<svg style="left:1574px;top:234px" width="14" height="14" viewBox="0 0 14 14"><path d="M3 1.5H8L11 4.5V12H3Z" fill="none" stroke="#fff" stroke-width="1.7"/><path d="M0 7H8M6 5L8 7L6 9" stroke="#1faa1f" stroke-width="1.6" fill="none"/></svg>
<svg style="left:1574px;top:263px" width="14" height="14" viewBox="0 0 14 14"><path d="M1.5 1.5H6.5L9.5 4.5V12H1.5Z" fill="none" stroke="#fff" stroke-width="1.7"/><path d="M4 8H13M11 6L13 8L11 10" stroke="#1faa1f" stroke-width="1.6" fill="none"/></svg>
<svg style="left:1574px;top:304px" width="14" height="14" viewBox="0 0 14 14"><path d="M3 3L1 5L3 7M1 5H8A3 3 0 0 1 8 11H6" stroke="#777" stroke-width="1.6" fill="none"/></svg>
<svg style="left:1574px;top:333px" width="14" height="14" viewBox="0 0 14 14"><path d="M10 3L12 5L10 7M12 5H5A3 3 0 0 0 5 11H7" stroke="#777" stroke-width="1.6" fill="none"/></svg>
<svg style="left:1574px;top:374px" width="14" height="14" viewBox="0 0 14 14"><rect x="1" y="1" width="8" height="8" fill="#eee" stroke="#222" stroke-width="0.8"/><rect x="5" y="5" width="9" height="9" fill="#e6e6e6" stroke="#222" stroke-width="0.8"/></svg>
<svg style="left:1574px;top:403px" width="14" height="14" viewBox="0 0 14 14"><circle cx="3" cy="11" r="2.2" fill="none" stroke="#fff" stroke-width="1.3"/><circle cx="11" cy="11" r="2.2" fill="none" stroke="#fff" stroke-width="1.3"/><path d="M4 9L11 0M10 9L3 0" stroke="#fff" stroke-width="1.3"/></svg>
<svg style="left:1574px;top:432px" width="14" height="14" viewBox="0 0 14 14"><rect x="1" y="2" width="11" height="11" fill="none" stroke="#fff" stroke-width="1.4"/><rect x="3" y="3" width="7" height="9" fill="#ddd"/><rect x="4" y="0.5" width="5" height="3" fill="#fff"/></svg>
<svg style="left:1574px;top:473px" width="14" height="14" viewBox="0 0 14 14"><circle cx="6" cy="6" r="5.5" fill="#eee"/><path d="M9 9L13 13" stroke="#eee" stroke-width="2"/><path d="M3 6H9M6 3V9" stroke="#aaa" stroke-width="0.8"/></svg>
<svg style="left:1574px;top:502px" width="14" height="14" viewBox="0 0 14 14"><circle cx="6" cy="6" r="5.5" fill="#eee"/><path d="M9 9L13 13" stroke="#eee" stroke-width="2"/><rect x="5" y="5" width="4" height="4" fill="#222"/></svg>
<svg style="left:1574px;top:531px" width="14" height="14" viewBox="0 0 14 14"><circle cx="6" cy="6" r="5.5" fill="#eee"/><path d="M9 9L13 13" stroke="#eee" stroke-width="2"/><rect x="4" y="2.5" width="4" height="7" fill="none" stroke="#999" stroke-width="1"/></svg>
<svg style="left:1574px;top:560px" width="14" height="14" viewBox="0 0 14 14"><rect x="1" y="1" width="11" height="11" fill="none" stroke="#ddd" stroke-width="1.4"/><circle cx="6.5" cy="6.5" r="2" fill="#ddd"/></svg>
<svg style="left:1574px;top:600px" width="14" height="14" viewBox="0 0 14 14"><rect x="0" y="0" width="9" height="8" fill="#fff"/><rect x="5" y="4" width="9" height="8" fill="#0a9a0a"/></svg>
<svg style="left:1574px;top:630px" width="14" height="14" viewBox="0 0 14 14"><rect x="0" y="0" width="8" height="8" fill="#eee"/><rect x="4" y="4" width="9" height="9" fill="#fff" stroke="#222" stroke-width="1"/><rect x="6.5" y="7.5" width="4" height="3" fill="#222"/></svg>
<svg style="left:1574px;top:660px" width="14" height="14" viewBox="0 0 14 14"><rect x="0" y="0" width="8" height="8" fill="#eee"/><rect x="4" y="4" width="9" height="9" fill="#fff" stroke="#222" stroke-width="1"/><rect x="6.5" y="8" width="4" height="3" fill="#222"/></svg>
<svg style="left:1574px;top:701px" width="14" height="14" viewBox="0 0 14 14"><circle cx="1.5" cy="1.5" r="1.5" fill="#1faa1f"/><circle cx="12.5" cy="1.5" r="1.5" fill="#1faa1f"/><circle cx="1.5" cy="12.5" r="1.5" fill="#1faa1f"/><circle cx="12.5" cy="12.5" r="1.5" fill="#1faa1f"/><circle cx="5.5" cy="6" r="3" fill="#eee"/><path d="M6 11L11 6V11Z" fill="#fff"/></svg>
<svg style="left:1574px;top:730px" width="14" height="14" viewBox="0 0 14 14"><circle cx="1.5" cy="1.5" r="1.3" fill="#fff"/><circle cx="12.5" cy="1.5" r="1.3" fill="#fff"/><circle cx="1.5" cy="12.5" r="1.3" fill="#fff"/><circle cx="12.5" cy="12.5" r="1.3" fill="#fff"/><circle cx="5.5" cy="6" r="3" fill="#eee"/><path d="M6 11L11 6V11Z" fill="#bbb"/></svg>
<svg style="left:1574px;top:760px" width="14" height="14" viewBox="0 0 14 14"><path d="M4 1V12L9 6.5Z" fill="#eee"/></svg>
<div class="ab" style="left:1540px;top:763px;width:22px;height:22px;background:#303030;border-radius:5px"></div>
<svg style="left:1543px;top:764px" width="16" height="16" viewBox="0 0 16 16"><circle cx="8" cy="4" r="3" fill="none" stroke="#ccc" stroke-width="1.2"/><circle cx="4.5" cy="10" r="3" fill="#1faa1f" stroke="#ccc" stroke-width="1.2"/><circle cx="11.5" cy="10" r="3" fill="#e0157f" stroke="#ccc" stroke-width="1.2"/></svg>
<svg style="left:0;top:0" width="1600" height="900"><rect x="0.5" y="792" width="13.17" height="15" fill="#fff"/><path d="M1.5 793L13.5 806M13.5 793L1.5 806" stroke="#a01818" stroke-width="1.3"/><rect x="14.17" y="792" width="14.47" height="15" fill="#000000"/><rect x="28.33" y="792" width="14.47" height="15" fill="#1a1a1a"/><rect x="42.50" y="792" width="14.47" height="15" fill="#333333"/><rect x="56.67" y="792" width="14.47" height="15" fill="#4d4d4d"/><rect x="70.83" y="792" width="14.47" height="15" fill="#666666"/><rect x="85.00" y="792" width="14.47" height="15" fill="#808080"/><rect x="99.17" y="792" width="14.47" height="15" fill="#999999"/><rect x="113.33" y="792" width="14.47" height="15" fill="#b3b3b3"/><rect x="127.50" y="792" width="14.47" height="15" fill="#cccccc"/><rect x="141.67" y="792" width="14.47" height="15" fill="#e6e6e6"/><rect x="155.83" y="792" width="14.47" height="15" fill="#ececec"/><rect x="170.00" y="792" width="14.47" height="15" fill="#f2f2f2"/><rect x="184.17" y="792" width="14.47" height="15" fill="#f9f9f9"/><rect x="198.33" y="792" width="14.47" height="15" fill="#ffffff"/><rect x="212.50" y="792" width="14.47" height="15" fill="#800000"/><rect x="226.67" y="792" width="14.47" height="15" fill="#ff0000"/><rect x="240.83" y="792" width="14.47" height="15" fill="#808000"/><rect x="255.00" y="792" width="14.47" height="15" fill="#ffff00"/><rect x="269.17" y="792" width="14.47" height="15" fill="#008000"/><rect x="283.33" y="792" width="14.47" height="15" fill="#00ff00"/><rect x="297.50" y="792" width="14.47" height="15" fill="#008080"/><rect x="311.67" y="792" width="14.47" height="15" fill="#00ffff"/><rect x="325.83" y="792" width="14.47" height="15" fill="#000080"/><rect x="340.00" y="792" width="14.47" height="15" fill="#0000ff"/><rect x="354.17" y="792" width="14.47" height="15" fill="#800080"/><rect x="368.33" y="792" width="14.47" height="15" fill="#ff00ff"/><rect x="382.50" y="792" width="14.47" height="15" fill="#2b0000"/><rect x="396.67" y="792" width="14.47" height="15" fill="#550000"/><rect x="410.83" y="792" width="14.47" height="15" fill="#800000"/><rect x="425.00" y="792" width="14.47" height="15" fill="#aa0000"/><rect x="439.17" y="792" width="14.47" height="15" fill="#d40000"/><rect x="453.33" y="792" width="14.47" height="15" fill="#ff0000"/><rect x="467.50" y="792" width="14.47" height="15" fill="#ff2a2a"/><rect x="481.67" y="792" width="14.47" height="15" fill="#ff5555"/><rect x="495.83" y="792" width="14.47" height="15" fill="#ff8080"/><rect x="510.00" y="792" width="14.47" height="15" fill="#ffaaaa"/><rect x="524.17" y="792" width="14.47" height="15" fill="#ffd5d5"/><rect x="538.33" y="792" width="14.47" height="15" fill="#280b0b"/><rect x="552.50" y="792" width="14.47" height="15" fill="#501616"/><rect x="566.67" y="792" width="14.47" height="15" fill="#782121"/><rect x="580.83" y="792" width="14.47" height="15" fill="#a02c2c"/><rect x="595.00" y="792" width="14.47" height="15" fill="#c83737"/><rect x="609.17" y="792" width="14.47" height="15" fill="#d35f5f"/><rect x="623.33" y="792" width="14.47" height="15" fill="#de8787"/><rect x="637.50" y="792" width="14.47" height="15" fill="#e9afaf"/><rect x="651.67" y="792" width="14.47" height="15" fill="#f4d7d7"/><rect x="665.83" y="792" width="14.47" height="15" fill="#241c1c"/><rect x="680.00" y="792" width="14.47" height="15" fill="#483737"/><rect x="694.17" y="792" width="14.47" height="15" fill="#6c5353"/><rect x="708.33" y="792" width="14.47" height="15" fill="#916f6f"/><rect x="722.50" y="792" width="14.47" height="15" fill="#ac9393"/><rect x="736.67" y="792" width="14.47" height="15" fill="#c8b7b7"/><rect x="750.83" y="792" width="14.47" height="15" fill="#e3dbdb"/><rect x="765.00" y="792" width="14.47" height="15" fill="#2b1100"/><rect x="779.17" y="792" width="14.47" height="15" fill="#552200"/><rect x="793.33" y="792" width="14.47" height="15" fill="#803300"/><rect x="807.50" y="792" width="14.47" height="15" fill="#aa4400"/><rect x="821.67" y="792" width="14.47" height="15" fill="#d45500"/><rect x="835.83" y="792" width="14.47" height="15" fill="#ff6600"/><rect x="850.00" y="792" width="14.47" height="15" fill="#ff7f2a"/><rect x="864.17" y="792" width="14.47" height="15" fill="#ff9955"/><rect x="878.33" y="792" width="14.47" height="15" fill="#ffb380"/><rect x="892.50" y="792" width="14.47" height="15" fill="#ffccaa"/><rect x="906.67" y="792" width="14.47" height="15" fill="#ffe6d5"/><rect x="920.83" y="792" width="14.47" height="15" fill="#28170b"/><rect x="935.00" y="792" width="14.47" height="15" fill="#502d16"/><rect x="949.17" y="792" width="14.47" height="15" fill="#784421"/><rect x="963.33" y="792" width="14.47" height="15" fill="#a05a2c"/><rect x="977.50" y="792" width="14.47" height="15" fill="#c87137"/><rect x="991.67" y="792" width="14.47" height="15" fill="#d38d5f"/><rect x="1005.83" y="792" width="14.47" height="15" fill="#deaa87"/><rect x="1020.00" y="792" width="14.47" height="15" fill="#e9c6af"/><rect x="1034.17" y="792" width="14.47" height="15" fill="#f4e3d7"/><rect x="1048.33" y="792" width="14.47" height="15" fill="#241f1c"/><rect x="1062.50" y="792" width="14.47" height="15" fill="#483e37"/><rect x="1076.67" y="792" width="14.47" height="15" fill="#6c5d53"/><rect x="1090.83" y="792" width="14.47" height="15" fill="#917c6f"/><rect x="1105.00" y="792" width="14.47" height="15" fill="#ac9d93"/><rect x="1119.17" y="792" width="14.47" height="15" fill="#c8beb7"/><rect x="1133.33" y="792" width="14.47" height="15" fill="#e3dedb"/><rect x="1147.50" y="792" width="14.47" height="15" fill="#2b2200"/><rect x="1161.67" y="792" width="14.47" height="15" fill="#554400"/><rect x="1175.83" y="792" width="14.47" height="15" fill="#806600"/><rect x="1190.00" y="792" width="14.47" height="15" fill="#aa8800"/><rect x="1204.17" y="792" width="14.47" height="15" fill="#d4aa00"/><rect x="1218.33" y="792" width="14.47" height="15" fill="#ffcc00"/><rect x="1232.50" y="792" width="14.47" height="15" fill="#ffd42a"/><rect x="1246.67" y="792" width="14.47" height="15" fill="#ffdd55"/><rect x="1260.83" y="792" width="14.47" height="15" fill="#ffe680"/><rect x="1275.00" y="792" width="14.47" height="15" fill="#ffeeaa"/><rect x="1289.17" y="792" width="14.47" height="15" fill="#fff6d5"/><rect x="1303.33" y="792" width="14.47" height="15" fill="#28220b"/><rect x="1317.50" y="792" width="14.47" height="15" fill="#504416"/><rect x="1331.67" y="792" width="14.47" height="15" fill="#786721"/><rect x="1345.83" y="792" width="14.47" height="15" fill="#a0892c"/><rect x="1360.00" y="792" width="14.47" height="15" fill="#c8ab37"/><rect x="1374.17" y="792" width="14.47" height="15" fill="#d3bc5f"/><rect x="1388.33" y="792" width="14.47" height="15" fill="#decd87"/><rect x="1402.50" y="792" width="14.47" height="15" fill="#e9ddaf"/><rect x="1416.67" y="792" width="14.47" height="15" fill="#f4eed7"/><rect x="1430.83" y="792" width="14.47" height="15" fill="#24221c"/><rect x="1445.00" y="792" width="14.47" height="15" fill="#484537"/><rect x="1459.17" y="792" width="14.47" height="15" fill="#6c6753"/><rect x="1473.33" y="792" width="14.47" height="15" fill="#918a6f"/><rect x="1487.50" y="792" width="14.47" height="15" fill="#aca793"/><rect x="1501.67" y="792" width="14.47" height="15" fill="#c8c4b7"/><rect x="1515.83" y="792" width="14.47" height="15" fill="#e3e2db"/></svg>
<svg style="left:1537px;top:790px" width="14" height="10" viewBox="0 0 14 10"><path d="M1 8L7 2L13 8" stroke="#eee" stroke-width="1.6" fill="none"/></svg>
<svg style="left:1562px;top:790px" width="14" height="10" viewBox="0 0 14 10"><path d="M1 2L7 8L13 2" stroke="#eee" stroke-width="1.6" fill="none"/></svg>
<svg style="left:1583px;top:789px" width="14" height="14" viewBox="0 0 14 14"><path d="M1 2H13M1 6H13M1 10H13" stroke="#fff" stroke-width="1.8"/></svg>
<div class="t" style="left:26px;top:812px;font-size:15px;color:#e6e6e6;">Fill:</div>
<div class="t" style="left:2px;top:833px;font-size:15px;color:#e6e6e6;">Stroke:</div>
<div class="t" style="left:68px;top:812px;font-size:15px;color:#e6e6e6;">N/A</div>
<div class="t" style="left:68px;top:833px;font-size:15px;color:#e6e6e6;">N/A</div>
<div class="t" style="left:138px;top:822px;font-size:15px;color:#e6e6e6;">O:</div>
<div class="ab" style="left:155px;top:809px;width:63px;height:38px;background:#313131;border:1px solid #2a2a2a;border-radius:4px"></div>
<div class="t" style="left:164px;top:822px;font-size:15px;color:#8a8a8a;">100</div>
<svg style="left:190px;top:829px" width="27" height="2" viewBox="0 0 27 2"><rect x="0" y="0" width="11" height="1.3" fill="#555"/><rect x="13" y="0" width="12" height="1.3" fill="#555"/></svg>
<div class="ab" style="left:209px;top:822px;width:1px;height:14px;background:#555;"></div>
<div class="ab" style="left:228px;top:818px;width:3px;height:22px;background:#e08a3a;"></div>
<div class="t" style="left:236px;top:822px;font-size:15px;color:#e6e6e6;">Image</div>
<svg style="left:294px;top:822px" width="14" height="12" viewBox="0 0 14 12"><path d="M1 2L3 4M13 2L11 4M7 0.5V3" stroke="#eee" stroke-width="1.2"/><path d="M0.5 7Q7 0.5 13.5 7Q7 13 0.5 7Z" fill="#eee"/><circle cx="7" cy="7" r="2.6" fill="#333"/><circle cx="7" cy="7" r="1.1" fill="#eee"/></svg>
<svg style="left:326px;top:822px" width="12" height="12" viewBox="0 0 12 12"><path d="M5.5 5V3A2.3 2.3 0 0 1 10.1 3V4.5" stroke="#eee" stroke-width="1.5" fill="none"/><rect x="0.5" y="5" width="8" height="7" fill="#eee"/></svg>
<div class="t" style="left:353px;top:822px;font-size:15px;color:#e6e6e6;">No objects selected. Click, Shift+click, Alt+scroll mouse on top of objects, or drag around objects to select.</div>
<div class="t" style="left:1279px;top:812px;font-size:15px;color:#e6e6e6;">X:</div>
<div class="t" style="left:1304px;top:812px;font-size:15px;color:#e6e6e6;">337.56</div>
<div class="t" style="left:1279px;top:833px;font-size:15px;color:#e6e6e6;">Y:</div>
<div class="t" style="left:1304px;top:833px;font-size:15px;color:#e6e6e6;">354.00</div>
<div class="ab" style="left:1372px;top:809px;width:90px;height:39px;background:#303030;border:1px solid #2b2b2b;border-radius:4px"></div>
<div class="ab" style="left:1485px;top:809px;width:99px;height:39px;background:#303030;border:1px solid #2b2b2b;border-radius:4px"></div>
<div class="t" style="left:1357px;top:822px;font-size:15px;color:#e6e6e6;">Z:</div>
<div class="t" style="left:1378px;top:822px;font-size:15px;color:#e6e6e6;">170%</div>
<svg style="left:1428px;top:829px" width="32" height="2" viewBox="0 0 32 2"><rect x="0" y="0" width="11" height="1.5" fill="#eee"/><rect x="16" y="0" width="13" height="1.5" fill="#eee"/></svg>
<div class="ab" style="left:1451px;top:823px;width:1.5px;height:13px;background:#eee;"></div>
<div class="t" style="left:1471px;top:822px;font-size:15px;color:#e6e6e6;">R:</div>
<div class="t" style="left:1500px;top:822px;font-size:15px;color:#e6e6e6;">0.00°</div>
<svg style="left:1549px;top:829px" width="32" height="2" viewBox="0 0 32 2"><rect x="0" y="0" width="11" height="1.5" fill="#eee"/><rect x="17" y="0" width="13" height="1.5" fill="#eee"/></svg>
<div class="ab" style="left:1573px;top:823px;width:1.5px;height:13px;background:#eee;"></div>
<div class="ab" style="left:0px;top:849px;width:1600px;height:1px;background:#050505;"></div>
<div class="ab" style="left:0px;top:850px;width:1600px;height:50px;background:#d1e4ef;"></div>
<div class="ab" style="left:0px;top:850px;width:1600px;height:1px;background:#e2f0f8;"></div>
<div class="ab" style="left:0px;top:850px;width:61px;height:50px;background:#cbe1ee;"></div>
<svg style="left:20px;top:865px" width="20" height="20" viewBox="0 0 20 20"><path d="M0 2.8L8 1.7V9.6H0ZM9 1.5L20 0V9.6H9ZM0 10.4H8V18.3L0 17.2ZM9 10.4H20V20L9 18.5Z" fill="#0a0a0a"/></svg>
<div class="ab" style="left:60px;top:850px;width:359px;height:50px;background:#fff;border:1px solid #c9cfd4;border-right:none"></div>
<svg style="left:75px;top:865px" width="20" height="20" viewBox="0 0 20 20"><circle cx="13" cy="7" r="6" fill="none" stroke="#222" stroke-width="1.4"/><path d="M8.8 11.2L0.5 19.5" stroke="#222" stroke-width="1.5"/></svg>
<div class="t" style="left:110px;top:868px;font-size:18px;color:#262626;letter-spacing:0.3px">Type here to search</div>
<svg style="left:441px;top:864px" width="27" height="22" viewBox="0 0 27 22"><rect x="1" y="0" width="10" height="4" rx="1.2" fill="#e9a51c"/><rect x="0" y="3" width="27" height="18" rx="1" fill="#fcd05a"/><rect x="0" y="3" width="27" height="2" fill="#f5bd35"/><path d="M3.5 21V14Q3.5 11.5 6 11.5H21Q23.5 11.5 23.5 14V21H19V16H8V21Z" fill="#3b8ee0"/><rect x="8" y="16" width="11" height="5" fill="#fcd05a"/></svg>
<div class="ab" style="left:429px;top:898px;width:39px;height:2px;background:#1a6ccc;"></div>
<div class="ab" style="left:468px;top:898px;width:11px;height:2px;background:#6fa3dc;"></div>
<div class="ab" style="left:502px;top:860px;width:30px;height:30px;background:#0b6fd6;"></div>
<svg style="left:506px;top:864px" width="22" height="22" viewBox="0 0 22 22"><circle cx="11" cy="11" r="9.8" fill="#fff"/><g stroke-linecap="round" stroke-width="2.4"><path d="M9 5V10" stroke="#36c5f0"/><path d="M5 9H8.5" stroke="#36c5f0"/><path d="M12.5 5V9" stroke="#2eb67d"/><path d="M12.5 9H17" stroke="#2eb67d"/><path d="M13 12.8V17" stroke="#ecb22e"/><path d="M13 12.8H17" stroke="#ecb22e"/><path d="M5 12.8H9.5" stroke="#e01e5a"/><path d="M9.2 13V17" stroke="#e01e5a"/></g></svg>
<div class="ab" style="left:492px;top:898px;width:50px;height:2px;background:#1a6ccc;"></div>
<svg style="left:564px;top:860px" width="33" height="33" viewBox="0 0 33 33"><defs><linearGradient id="av" x1="0" y1="0" x2="0" y2="1"><stop offset="0" stop-color="#7fb3e6"/><stop offset="0.5" stop-color="#5b86b0"/><stop offset="1" stop-color="#3a4650"/></linearGradient></defs><circle cx="15" cy="15" r="15" fill="#db4437"/><path d="M15 15L28 7.5A15 15 0 0 1 15 30Z" fill="#f4c20d"/><path d="M15 15L15 30A15 15 0 0 1 2 7.5Z" fill="#0f9d58"/><circle cx="15" cy="15" r="6.5" fill="#fff"/><circle cx="15" cy="15" r="5" fill="#4285f4"/><circle cx="24" cy="24" r="9" fill="url(#av)"/><path d="M19 32Q21 22 24 21Q27 22 29 31Z" fill="#2a2e33"/></svg>
<div class="ab" style="left:554px;top:898px;width:40px;height:2px;background:#1a6ccc;"></div>
<div class="ab" style="left:594px;top:898px;width:10px;height:2px;background:#6fa3dc;"></div>
<div class="ab" style="left:612px;top:850px;width:60px;height:50px;background:#eaf3f8;"></div>
<svg style="left:627px;top:860px" width="30" height="30" viewBox="0 0 30 30"><defs><linearGradient id="ig627" x1="0" y1="0" x2="0.6" y2="1"><stop offset="0" stop-color="#fff"/><stop offset="0.55" stop-color="#9aa0b8"/><stop offset="1" stop-color="#2a3050"/></linearGradient></defs><g transform="scale(0.97)"><path d="M13 1.2Q14.5 0 16 1.2L28 12.5Q29.5 14.2 27.5 15.2L19 18.5L21 20.5L17.5 21L18 25L14.5 27.5L12 24L8 25L9.5 21.5L5.5 20.5L9 18.5L2 15.2Q0 14.2 1.5 12.5Z" fill="#0c0c10"/><path d="M14.5 2.5L25.5 13Q22 12.5 19 14.5L17 11.5L15.5 14L13.5 9.5L11.5 13Q8 12 4 13Z" fill="url(#ig627)"/><path d="M10 19.5Q14 18.5 19 19.5" stroke="#888" stroke-width="0.8" fill="none"/><circle cx="7" cy="23.5" r="1.3" fill="#0c0c10"/><circle cx="22.5" cy="22" r="1.1" fill="#0c0c10"/><circle cx="25" cy="19.5" r="1.2" fill="#0c0c10"/></g></svg>
<div class="ab" style="left:612px;top:898px;width:60px;height:2px;background:#1a6ccc;"></div>
<svg style="left:1205px;top:870px" width="16" height="9" viewBox="0 0 16 9"><path d="M1 8L8 1L15 8" stroke="#222" stroke-width="1.3" fill="none"/></svg>
<svg style="left:1234px;top:866px" width="20" height="18" viewBox="0 0 20 18"><path d="M1 6H4L9 1V17L4 12H1Z" fill="none" stroke="#222" stroke-width="1.1"/><path d="M12 6Q14 9 12 12M14.5 4Q18 9 14.5 14M17 2Q22 9 17 16" stroke="#222" stroke-width="1.1" fill="none"/></svg>
<svg style="left:1263px;top:867px" width="21" height="14" viewBox="0 0 21 14"><path d="M4 13A4 4 0 0 1 3 6A6 6 0 0 1 14 4A4.5 4.5 0 0 1 20 10A3.5 3.5 0 0 1 17 13Z" fill="#1a7fd6"/></svg>
<svg style="left:1293px;top:867px" width="21" height="14" viewBox="0 0 21 14"><path d="M4 13A4 4 0 0 1 3 6A6 6 0 0 1 14 4A4.5 4.5 0 0 1 20 10A3.5 3.5 0 0 1 17 13Z" fill="#9a9a9a" stroke="#333" stroke-width="1.2"/></svg>
<svg style="left:1323px;top:866px" width="21" height="16" viewBox="0 0 21 16"><path d="M2 0V5M5 0V5" stroke="#222" stroke-width="1"/><rect x="3" y="6" width="17" height="9" fill="none" stroke="#222" stroke-width="1.1"/><rect x="5" y="8" width="13" height="5" fill="#111"/></svg>
<svg style="left:1356px;top:866px" width="16" height="18" viewBox="0 0 16 18"><rect x="1" y="4" width="9" height="10" rx="1" fill="none" stroke="#222" stroke-width="1.1"/><path d="M10 7L14 5V13L10 11" fill="none" stroke="#222" stroke-width="1.1"/></svg>
<svg style="left:1383px;top:866px" width="21" height="19" viewBox="0 0 21 19"><path d="M1 3L19 1V15L1 15Z" fill="none" stroke="#333" stroke-width="1.1"/><path d="M8 9A3 3 0 0 1 13 7M13 10A3 3 0 0 1 8 11" stroke="#333" stroke-width="1.1" fill="none"/><circle cx="16" cy="15" r="3.3" fill="#1a6fd0"/></svg>
<svg style="left:1416px;top:867px" width="16" height="15" viewBox="0 0 16 15"><path d="M1 14A13 13 0 0 1 14 1M4 14A10 10 0 0 1 14 4M7 14A7 7 0 0 1 14 7" stroke="#999" stroke-width="1.1" fill="none"/><circle cx="12" cy="12" r="1.5" fill="#222"/></svg>
<div class="t" style="left:1468px;top:856px;font-size:15px;color:#1e1e1e;">20:49</div>
<div class="t" style="left:1447px;top:879px;font-size:15px;color:#1e1e1e;">18/07/2023</div>
<svg style="left:1548px;top:864px" width="32" height="28" viewBox="0 0 32 28"><path d="M1 1H20V15H8L4 19V15H1Z" fill="#111"/><path d="M4 5H17M4 8H17M4 11H13" stroke="#eee" stroke-width="1.1"/><circle cx="20" cy="18" r="8" fill="#d8d8d8" stroke="#888" stroke-width="0.8"/><text x="20" y="22.5" font-size="12" text-anchor="middle" fill="#111" font-family="Liberation Sans">2</text></svg>
<div class="ab" style="left:1595px;top:850px;width:1px;height:50px;background:#aab8c4;"></div>
</body></html>
